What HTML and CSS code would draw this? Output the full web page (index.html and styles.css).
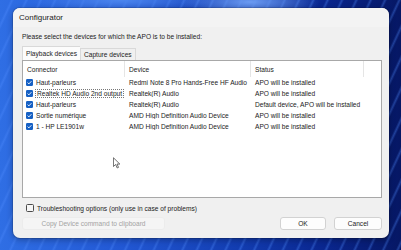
FILE: index.html
```html
<!DOCTYPE html>
<html lang="en">
<head>
	<meta charset="UTF-8">
	<title>Configurator</title>
	<link rel="stylesheet" href="styles.css">
</head>
<body>

<div class="dialog">
	<div class="title">Configurator</div>

	<div class="body">
		<p class="prompt">Please select the devices for which the APO is to be installed:</p>

		<div class="tabs">
			<span class="tab active">Playback devices</span>
			<span class="tab">Capture devices</span>
		</div>

		<div class="list">
			<div class="row head">
				<span class="cell">Connector</span>
				<span class="cell">Device</span>
				<span class="cell">Status</span>
				<span class="cell"></span>
			</div>

			<div class="row">
				<span class="cell name"><svg class="check" viewBox="0 0 7 7"><rect width="7" height="7" rx="1.3"/><polyline points="1.6,3.6 2.9,4.9 5.4,2.2"/></svg><span>Haut-parleurs</span></span>
				<span class="cell">Redmi Note 8 Pro Hands-Free HF Audio</span>
				<span class="cell">APO will be installed</span>
			</div>
			<div class="row">
				<span class="cell name"><svg class="check" viewBox="0 0 7 7"><rect width="7" height="7" rx="1.3"/><polyline points="1.6,3.6 2.9,4.9 5.4,2.2"/></svg><span class="focus">Realtek HD Audio 2nd output</span></span>
				<span class="cell">Realtek(R) Audio</span>
				<span class="cell">APO will be installed</span>
			</div>
			<div class="row">
				<span class="cell name"><svg class="check" viewBox="0 0 7 7"><rect width="7" height="7" rx="1.3"/><polyline points="1.6,3.6 2.9,4.9 5.4,2.2"/></svg><span>Haut-parleurs</span></span>
				<span class="cell">Realtek(R) Audio</span>
				<span class="cell">Default device, APO will be installed</span>
			</div>
			<div class="row">
				<span class="cell name"><svg class="check" viewBox="0 0 7 7"><rect width="7" height="7" rx="1.3"/><polyline points="1.6,3.6 2.9,4.9 5.4,2.2"/></svg><span>Sortie numérique</span></span>
				<span class="cell">AMD High Definition Audio Device</span>
				<span class="cell">APO will be installed</span>
			</div>
			<div class="row">
				<span class="cell name"><svg class="check" viewBox="0 0 7 7"><rect width="7" height="7" rx="1.3"/><polyline points="1.6,3.6 2.9,4.9 5.4,2.2"/></svg><span>1 - HP LE1901w</span></span>
				<span class="cell">AMD High Definition Audio Device</span>
				<span class="cell">APO will be installed</span>
			</div>

			<!-- mouse pointer over the list -->
			<svg class="pointer" viewBox="0 0 8 13"><path d="M0.5 0.5 L0.5 10.5 L3 8.2 L4.8 12.2 L6.3 11.5 L4.6 7.7 L7.8 7.7 Z"/></svg>
		</div>

		<label class="option">
			<span class="box"></span>
			<span>Troubleshooting options (only use in case of problems)</span>
		</label>

		<div class="footer">
			<button class="btn copy" disabled>Copy Device command to clipboard</button>
			<div class="actions">
				<button class="btn">OK</button>
				<button class="btn">Cancel</button>
			</div>
		</div>
	</div>
</div>

</body>
</html>
```

FILE: styles.css
```css
:root {
	--col-1: 102px;
	--col-2: 126px;
	--col-3: 113px;
	--row-height: 11px;
	--accent: #1660c4;
}

html, body {
	height: 100%;
}

body {
	margin: 0;
	overflow: hidden;
	font-family: "Liberation Sans", Arial, sans-serif;
	font-size: 6.6px;
	color: #1b1b1b;
	background-color: #1f4fc8;
	background-image:
		radial-gradient(ellipse 70px 18px at 250px 2px, #6b9bf2 0%, rgba(107, 155, 242, 0) 100%),
		radial-gradient(ellipse 90px 14px at 120px 0px, #4c86ee 0%, rgba(76, 134, 238, 0) 100%),
		repeating-linear-gradient(115deg, rgba(80, 140, 255, 0) 0px, rgba(80, 140, 255, 0) 9px, rgba(80, 140, 255, .35) 11px, rgba(80, 140, 255, 0) 13px),
		linear-gradient(90deg, #2f6ee4 0%, #2258d4 30%, #123cb0 60%, #0a2790 80%, #061764 100%);
	padding: 8px 12px 0 13px;
	box-sizing: border-box;
}

.dialog {
	width: 376px;
	height: 230px;
	background: #f0f0f0;
	border-radius: 7px;
	box-shadow: 0 0 0 1px rgba(0, 0, 0, .12), 0 2px 6px rgba(0, 0, 0, .3);
	display: flex;
	flex-direction: column;
	overflow: hidden;
}

.title {
	height: 19px;
	padding-left: 6px;
	display: flex;
	align-items: center;
	font-size: 8px;
	color: #222;
	background: #f3f3f3;
}

.body {
	padding: 0 7px 0 9px;
	display: flex;
	flex-direction: column;
}

.prompt {
	margin: 0;
	height: 18px;
	display: flex;
	align-items: center;
}

/* tabs */
.tabs {
	display: flex;
	height: 13px;
	margin-top: 2px;
	padding-top: 1px;
	box-sizing: border-box;
	align-items: flex-end;
}

.tab {
	height: 11px;
	padding: 0 3px;
	display: flex;
	align-items: center;
	border: 1px solid #d9d9d9;
	border-bottom: 0;
	background: #f0f0f0;
}

.tab.active {
	height: 13px;
	background: #fcfcfc;
	border-right: 0;
}

/* device list */
.list {
	position: relative;
	height: 138px;
	border: 1px solid #a8a8a8;
	background: #fff;
	box-sizing: border-box;
	width: 360px;
}

.row {
	display: grid;
	grid-template-columns: var(--col-1) var(--col-2) var(--col-3) 1fr;
	height: var(--row-height);
	align-items: center;
	white-space: nowrap;
}

.row.head {
	height: 16px;
	align-items: stretch;
}

.row.head .cell {
	display: flex;
	align-items: center;
	padding-left: 4px;
	border-right: 1px solid #e5e5e5;
}

.row.head .cell:last-child {
	border-right: 0;
}

.row .cell {
	padding-left: 4px;
	overflow: hidden;
}

.row .cell.name {
	padding-left: 3px;
	display: flex;
	align-items: center;
	gap: 3px;
	overflow: visible;
}

.check {
	width: 7px;
	height: 7px;
	flex: none;
}

.check rect {
	fill: var(--accent);
}

.check polyline {
	fill: none;
	stroke: #fff;
	stroke-width: 0.9;
}

.focus {
	outline: 1px dotted #777;
	outline-offset: 0;
	padding: 0 1px;
}

.pointer {
	position: absolute;
	left: 90px;
	top: 96px;
	width: 7px;
	height: 12px;
}

.pointer path {
	fill: #fff;
	stroke: #333;
	stroke-width: 0.8;
	stroke-linejoin: round;
}

/* troubleshooting */
.option {
	display: flex;
	align-items: center;
	gap: 3px;
	height: 14px;
	margin-top: 3px;
	padding-left: 4px;
}

.box {
	width: 6px;
	height: 6px;
	border: 1px solid #4a4a4a;
	border-radius: 1.5px;
	background: #f6f6f6;
}

/* bottom buttons */
.footer {
	display: flex;
	justify-content: space-between;
	margin-top: 2px;
}

.btn {
	height: 13px;
	font-family: inherit;
	font-size: 6.6px;
	color: #1b1b1b;
	background: #fdfdfd;
	border: 1px solid #d2d2d2;
	border-radius: 3px;
	padding: 0;
	width: 46px;
}

.btn.copy {
	width: 143px;
	background: #f5f5f5;
	border-color: #ececec;
	color: #a3a3a3;
}

.actions {
	display: flex;
	gap: 8px;
}

.actions .btn:last-child {
	width: 48px;
}
```
